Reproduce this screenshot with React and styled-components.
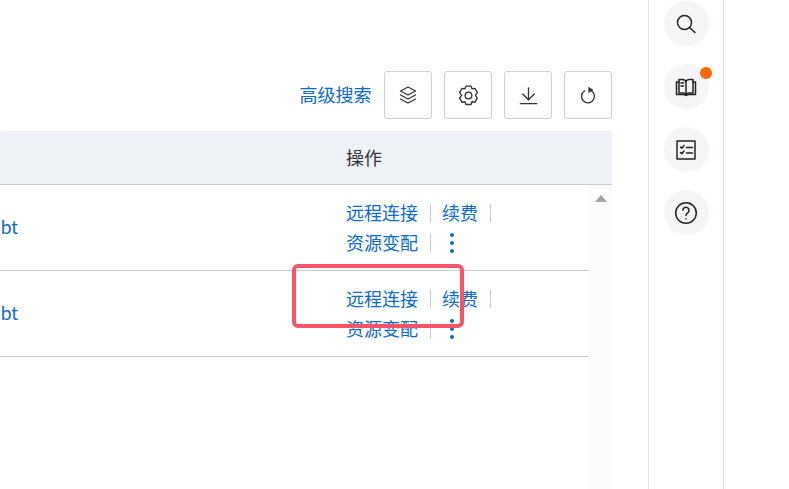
import React from "react";
import styled, { createGlobalStyle } from "styled-components";

const GlobalStyle = createGlobalStyle`
  html, body {
    margin: 0;
    padding: 0;
    background: #ffffff;
    overflow: hidden;
  }
  * {
    box-sizing: border-box;
  }
`;

const Page = styled.div`
  position: relative;
  width: 789px;
  height: 489px;
  display: flex;
  overflow: hidden;
  font-family: "Noto Sans CJK SC", "Liberation Sans", sans-serif;
  font-size: 18px;
  color: #333333;
`;

const Main = styled.div`
  width: 648px;
  padding: 71px 36px 0 0;
  flex-shrink: 0;
`;

const Toolbar = styled.div`
  height: 48px;
  display: flex;
  align-items: center;
  justify-content: flex-end;
  gap: 12px;
`;

const SearchLink = styled.a`
  margin-right: 0.5px;
  padding-bottom: 2px;
  color: #0a6cc9;
  line-height: 24px;
`;

const ToolButton = styled.div`
  width: 48px;
  height: 48px;
  display: flex;
  align-items: center;
  justify-content: center;
  background: #ffffff;
  border: 1px solid #cfcfcf;
  border-radius: 3px;
  color: #333333;
`;

const TableHeader = styled.div`
  margin-top: 12px;
  height: 54px;
  display: grid;
  grid-template-columns: 346px 1fr;
  align-items: center;
  padding-bottom: 2px;
  background: #eef1f6;
  border-bottom: 1px solid #cccccc;
  border-radius: 2px 2px 0 0;
`;

const HeaderLabel = styled.div`
  grid-column: 2;
  line-height: 24px;
  color: #333333;
`;

const TableBody = styled.div`
  display: grid;
  grid-template-columns: 589px 23px;
`;

const Rows = styled.div`
  display: flex;
  flex-direction: column;
`;

const Row = styled.div`
  height: 86px;
  display: grid;
  grid-template-columns: 18px 328px 1fr;
  align-items: center;
  border-bottom: 1px solid #cccccc;
`;

const NameCell = styled.div`
  direction: rtl;
  overflow: hidden;
  white-space: nowrap;
  color: #0a6cc9;
  line-height: 24px;
  padding-bottom: 4px;
`;

const Actions = styled.div`
  grid-column: 3;
  display: flex;
  flex-direction: column;
  gap: 6px;
`;

const ActionLine = styled.div`
  height: 24px;
  display: flex;
  align-items: center;
`;

const ActionLink = styled.a`
  padding-bottom: 2px;
  color: #0a6cc9;
  line-height: 24px;
  white-space: nowrap;
`;

const Divider = styled.span`
  width: 1px;
  height: 18px;
  margin: 0 11px 0 12px;
  background: #c8c8c8;
`;

const MoreDots = styled.span`
  display: flex;
  flex-direction: column;
  gap: 4px;
  margin-left: 8px;

  i {
    width: 4px;
    height: 4px;
    border-radius: 50%;
    background: #0a6cc9;
  }
`;

const ScrollTrack = styled.div`
  height: 304px;
  padding-top: 10px;
  display: flex;
  justify-content: center;
  background: #fbfbfb;
`;

const ScrollArrow = styled.div`
  width: 0;
  height: 0;
  border-left: 6px solid transparent;
  border-right: 6px solid transparent;
  border-bottom: 7px solid #a3a3a3;
`;

const SidePanel = styled.div`
  width: 76px;
  height: 489px;
  padding-top: 1px;
  display: flex;
  flex-direction: column;
  align-items: center;
  gap: 18px;
  border-left: 1px solid #e4e4e4;
  border-right: 1px solid #e4e4e4;
  flex-shrink: 0;
`;

const SideButton = styled.div`
  position: relative;
  width: 45px;
  height: 45px;
  display: flex;
  align-items: center;
  justify-content: center;
  border-radius: 50%;
  background: #f4f5f7;
  color: #222222;
`;

const Badge = styled.span`
  position: absolute;
  top: 3px;
  right: -3px;
  width: 12px;
  height: 12px;
  border-radius: 50%;
  background: #ff6a00;
`;

const Annotation = styled.div`
  position: absolute;
  left: 292px;
  top: 264px;
  width: 172px;
  height: 64px;
  border: 4px solid #fb5468;
  border-radius: 6px;
  pointer-events: none;
`;

const Icon = ({ size = 20, width = 1.5, children }) => (
  <svg
    width={size}
    height={size}
    viewBox="0 0 24 24"
    fill="none"
    stroke="currentColor"
    strokeWidth={width}
    strokeLinecap="round"
    strokeLinejoin="round"
  >
    {children}
  </svg>
);

const rows = ["a", "b"];

export default function App() {
  return (
    <Page>
      <GlobalStyle />
      <Main>
        <Toolbar>
          <SearchLink>高级搜索</SearchLink>
          <ToolButton>
            <Icon size={24} width={1.3}>
              <path d="M12 4l7.500 4-7.500 4-7.500-4z" />
              <path d="M4.500 12l7.500 4 7.500-4" />
              <path d="M4.500 16l7.500 4 7.500-4" />
            </Icon>
          </ToolButton>
          <ToolButton>
            <Icon size={25} width={1.3}>
              <path d="M9.600 3h4.800l1 2.600 2.700-.5 2.400 3.900-1.800 2.800 1.800 2.800-2.400 3.900-2.700-.5-1 2.600H9.600l-1-2.600-2.700.5-2.400-3.900 1.800-2.800L3.500 9l2.400-3.900 2.700.5z" />
              <circle cx="12" cy="12" r="3.200" />
            </Icon>
          </ToolButton>
          <ToolButton>
            <Icon size={23} width={1.4}>
              <path d="M12 4v12.500" />
              <path d="M6 10.500l6 6 6-6" />
              <path d="M3.500 20.500h17" />
            </Icon>
          </ToolButton>
          <ToolButton>
            <Icon width={1.6}>
              <path d="M8 6.900A7.800 7.800 0 1 0 13.500 5.950" />
              <path d="M13 2.800L18 6l-5 3z" fill="currentColor" strokeWidth={0.6} />
            </Icon>
          </ToolButton>
        </Toolbar>
        <TableHeader>
          <HeaderLabel>操作</HeaderLabel>
        </TableHeader>
        <TableBody>
          <Rows>
            {rows.map((key) => (
              <Row key={key}>
                <NameCell>bt</NameCell>
                <Actions>
                  <ActionLine>
                    <ActionLink>远程连接</ActionLink>
                    <Divider />
                    <ActionLink>续费</ActionLink>
                    <Divider />
                  </ActionLine>
                  <ActionLine>
                    <ActionLink>资源变配</ActionLink>
                    <Divider />
                    <MoreDots>
                      <i />
                      <i />
                      <i />
                    </MoreDots>
                  </ActionLine>
                </Actions>
              </Row>
            ))}
          </Rows>
          <ScrollTrack>
            <ScrollArrow />
          </ScrollTrack>
        </TableBody>
      </Main>
      <SidePanel>
        <SideButton>
          <Icon size={24}>
            <circle cx="10.500" cy="10.500" r="7" />
            <path d="M15.500 15.500l5.500 5" />
          </Icon>
        </SideButton>
        <SideButton>
          <Badge />
          <Icon size={24}>
            <path d="M12 6.500c-1-1.500-2-2-3.500-2H5v13.500h4c1.500 0 2.500.5 3 1.500.5-1 1.500-1.500 3-1.500h4V4.500h-3.500c-2 0-3 .5-3.500 2z" />
            <path d="M12 6.500v13" />
            <path d="M5 7H2.500v12.500H9c1.200 0 2.300.3 3 1 .7-.7 1.800-1 3-1h6.500V7H19" />
            <path d="M7 8h2.500M7 11h2.500" />
          </Icon>
        </SideButton>
        <SideButton>
          <Icon size={24}>
            <rect x="3" y="3" width="18" height="18" />
            <path d="M6.500 9l1.300 1.300 2.200-2.800M6.500 14.500l1.300 1.300 2.200-2.800" />
            <path d="M12.500 9.500h6M12.500 15h6" />
          </Icon>
        </SideButton>
        <SideButton>
          <Icon size={26} width={1.4}>
            <circle cx="12" cy="12" r="9.500" />
            <path d="M9.200 9.500a2.800 2.800 0 1 1 4.400 2.300c-1 .7-1.600 1.200-1.600 2.500" />
            <path d="M12 17.300v.2" />
          </Icon>
        </SideButton>
      </SidePanel>
      <Annotation />
    </Page>
  );
}
